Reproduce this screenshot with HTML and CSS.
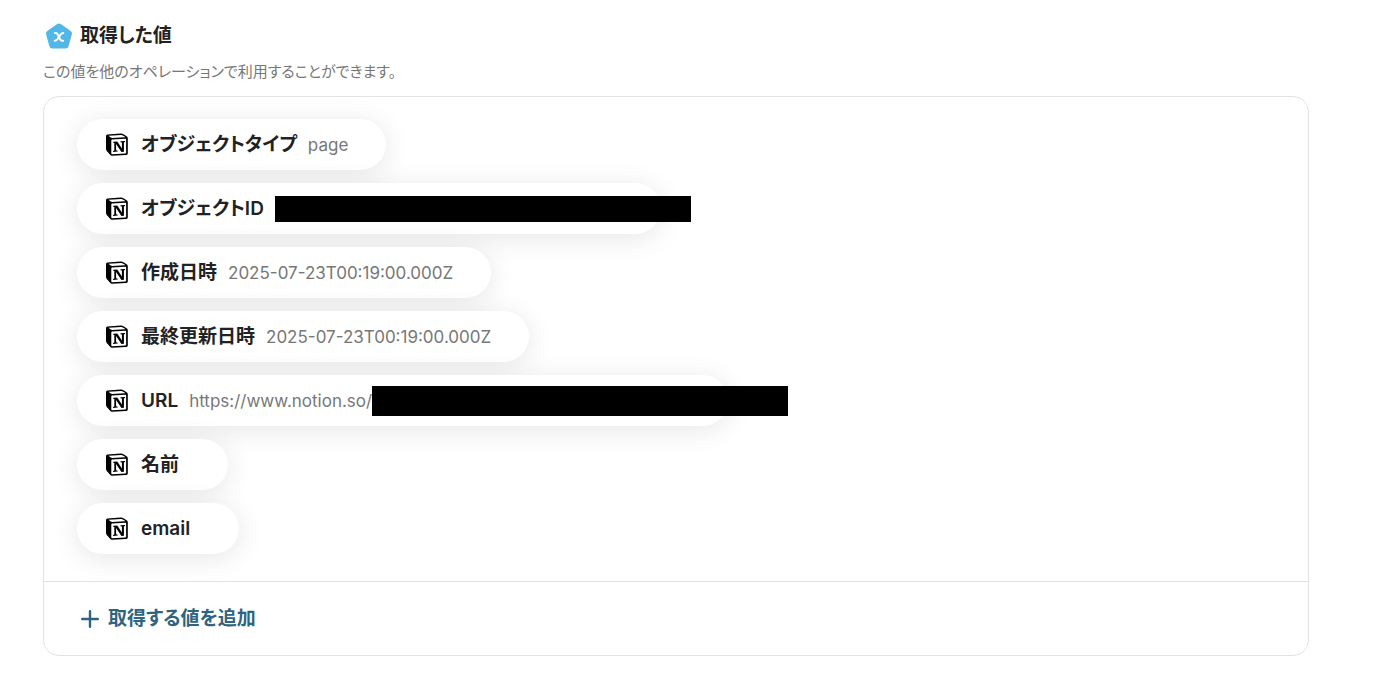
FILE: index.html
```html
<!DOCTYPE html>
<html lang="ja">
<head>
  <meta charset="UTF-8" />
  <meta name="viewport" content="width=device-width, initial-scale=1.0"/>
  <title>取得した値</title>
  <link rel="stylesheet" href="styles.css">
</head>
<body>
  <!-- Shared Notion icon -->
  <svg class="sprite" width="0" height="0" aria-hidden="true">
    <symbol id="notion" viewBox="0 0 24 24">
      <path fill="#000" d="M2.500 1.500 15.800.6q1.300-.1 2.200.5l4 2.500q.8.5.8 1.600v15.100q0 1.500-1.500 1.600L7.200 22.800q-1.200.1-1.900-.8l-3.700-4.300q-.6-.8-.6-1.900V3q0-1.400 1.500-1.500z"/>
      <path fill="#fff" d="M3.800 2.700 16 1.900q.8 0 1.300.3l2.700 1.600q.3.300-.2.400L7 5q-.7 0-1.200-.4L3.700 3.100q-.3-.3.100-.4zM6.300 7.500q0-.8.800-.9l13.200-.8q.8 0 .8.800v13.100q0 .7-.8.800l-13.200.8q-.8 0-.8-.7z"/>
      <path fill="#000" d="M8.200 8.700l4.100-.3 4.600 7.200V9.500l-1.400-.3v-1l4.500-.3v1l-1.100.5v9.300l-2.500.4-5.300-8.200v6.300l1.600.5v.9l-4.600.3V18l1.200-.6V10.100l-1.100-.3z"/>
    </symbol>
  </svg>

  <main class="output">
    <h1 class="title">
      <svg class="title-icon" viewBox="0 0 28 28" aria-hidden="true">
        <path fill="#52b7e6" stroke="#52b7e6" stroke-width="6" stroke-linejoin="round" d="M14 4.500 24 11.500 20.700 23.500H7.300L4 11.500z"/>
        <path fill="none" stroke="#fff" stroke-width="2" stroke-linecap="round" stroke-linejoin="round" d="M10 11h.8c1.200 0 1.500.5 2.100 1.700l2.200 4.600c.5 1 .9 1.500 2 1.500h1M18.300 11c-1.300 0-1.900.3-2.700 1.500l-3.200 4.700c-.8 1.200-1.300 1.600-2.700 1.600"/>
      </svg>
      取得した値
    </h1>
    <p class="description">この値を他のオペレーションで利用することができます。</p>

    <section class="card">
      <ul class="values">
        <li class="pill">
          <svg class="pill-icon" aria-hidden="true"><use href="#notion"/></svg>
          <span class="name">オブジェクトタイプ</span>
          <span class="value">page</span>
        </li>
        <li class="pill">
          <svg class="pill-icon" aria-hidden="true"><use href="#notion"/></svg>
          <span class="name">オブジェクトID</span>
          <span class="value"><span class="mask mask-id"></span></span>
        </li>
        <li class="pill">
          <svg class="pill-icon" aria-hidden="true"><use href="#notion"/></svg>
          <span class="name">作成日時</span>
          <span class="value">2025-07-23T00:19:00.000Z</span>
        </li>
        <li class="pill">
          <svg class="pill-icon" aria-hidden="true"><use href="#notion"/></svg>
          <span class="name">最終更新日時</span>
          <span class="value">2025-07-23T00:19:00.000Z</span>
        </li>
        <li class="pill">
          <svg class="pill-icon" aria-hidden="true"><use href="#notion"/></svg>
          <span class="name">URL</span>
          <span class="value">https://www.notion.so/<span class="mask mask-url"></span></span>
        </li>
        <li class="pill">
          <svg class="pill-icon" aria-hidden="true"><use href="#notion"/></svg>
          <span class="name">名前</span>
          <span class="value"></span>
        </li>
        <li class="pill">
          <svg class="pill-icon" aria-hidden="true"><use href="#notion"/></svg>
          <span class="name">email</span>
          <span class="value"></span>
        </li>
      </ul>

      <div class="card-footer">
        <button type="button" class="add-button">
          <svg class="add-icon" viewBox="0 0 18 18" aria-hidden="true">
            <path fill="none" stroke="currentColor" stroke-width="2.400" stroke-linecap="round" d="M9 1.200v15.600M1.200 9h15.600"/>
          </svg>
          取得する値を追加
        </button>
      </div>
    </section>
  </main>
</body>
</html>
```

FILE: styles.css
```css
* {
  box-sizing: border-box;
}

body {
  font-family: Inter, "Noto Sans CJK JP", sans-serif;
  font-feature-settings: "palt";
  margin: 0;
  background: #fff;
  color: #222;
}

.sprite {
  position: absolute;
}

.output {
  padding: 20px 73px 28px 43px;
}

.title {
  display: flex;
  align-items: center;
  gap: 7px;
  margin: 0;
  padding-left: 2px;
  font-size: 19px;
  font-weight: 600;
  line-height: 32px;
}

.title-icon {
  width: 28px;
  height: 28px;
}

.description {
  margin: 8px 0 12px;
  color: #777;
  font-size: 15px;
  line-height: 24px;
}

.card {
  border: 1px solid #e3e3e3;
  border-radius: 16px;
}

/* Values */
.values {
  display: flex;
  flex-direction: column;
  align-items: flex-start;
  gap: 13px;
  margin: 0;
  padding: 22px 33px 27px;
  list-style: none;
}

.pill {
  display: flex;
  align-items: center;
  height: 51px;
  padding: 0 38px 0 28px;
  border-radius: 26px;
  background: #fff;
  box-shadow: 0 4px 28px rgba(0, 0, 0, 0.1);
}

.pill-icon {
  width: 24px;
  height: 24px;
  margin-right: 12px;
}

.name {
  font-size: 19px;
  font-weight: 600;
  line-height: 28px;
}

.value {
  display: flex;
  align-items: center;
  margin-left: 11px;
  color: #777;
  font-size: 17px;
  line-height: 28px;
}

/* The black bars run past the end of their pill */
.mask {
  position: relative;
  width: 416px;
  background: #000;
}

.mask-id {
  height: 26px;
  margin-right: -68px;
}

.mask-url {
  height: 30px;
  margin-right: -98px;
}

/* Footer */
.card-footer {
  padding: 20px 37px;
  border-top: 1px solid #e3e3e3;
}

.add-button {
  display: flex;
  align-items: center;
  gap: 9px;
  padding: 0;
  border: none;
  background: none;
  color: #2f6480;
  font-family: inherit;
  font-feature-settings: inherit;
  font-size: 19px;
  font-weight: 600;
  line-height: 33px;
  cursor: pointer;
}

.add-icon {
  width: 18px;
  height: 18px;
}
```
